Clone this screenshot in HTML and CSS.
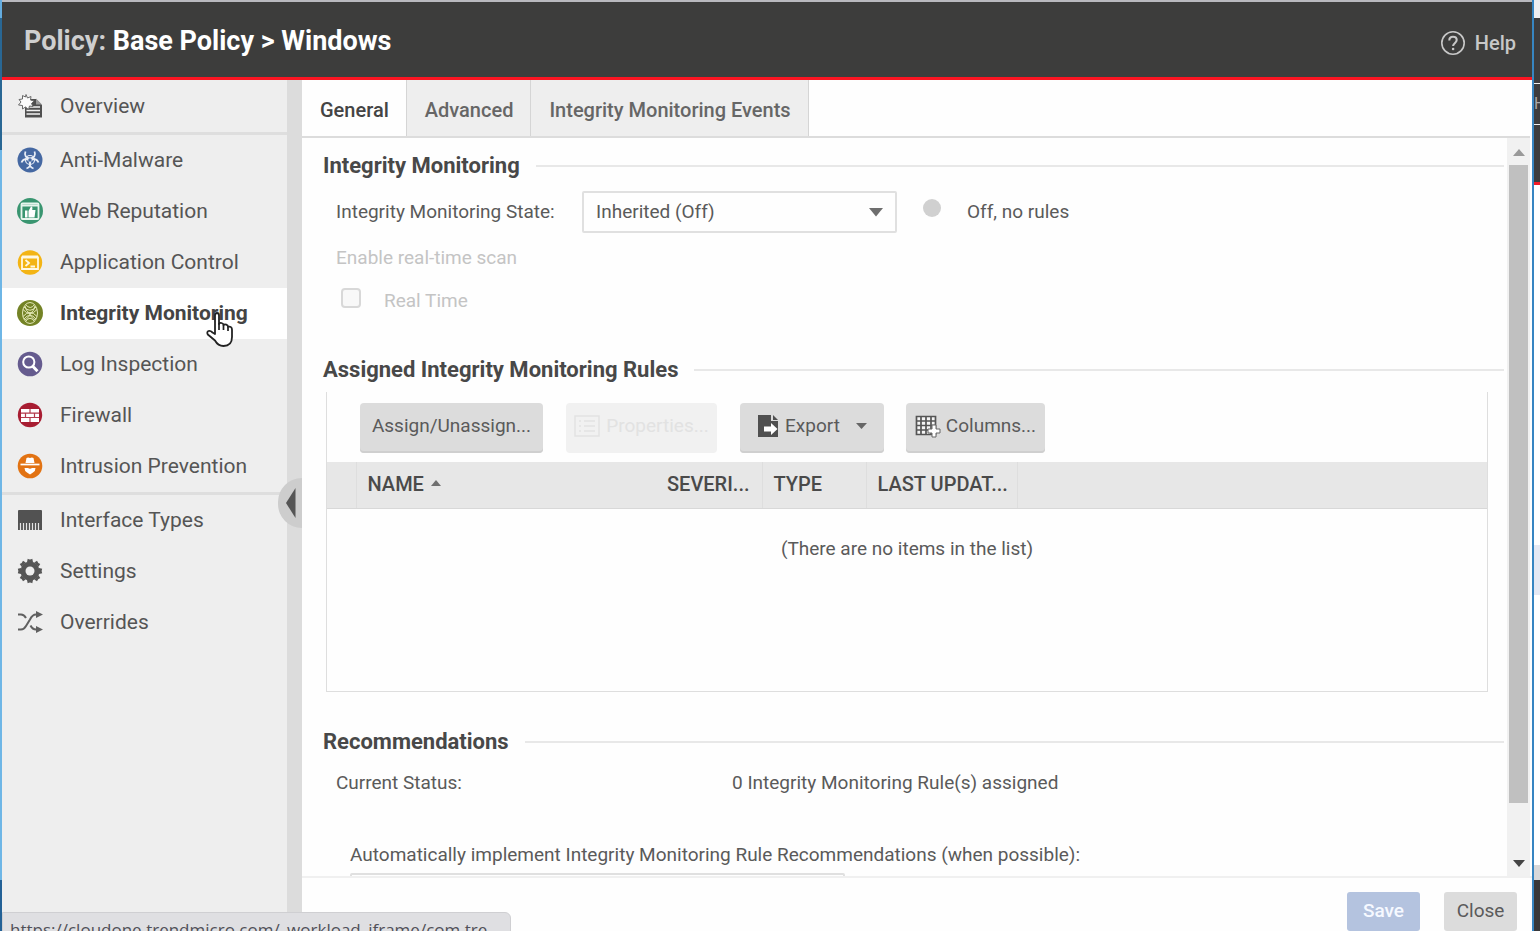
FILE: index.html
```html
<!DOCTYPE html>
<html lang="en">
<head>
<meta charset="utf-8">
<title>Policy: Base Policy &gt; Windows</title>
<link rel="stylesheet" href="styles.css">
</head>
<body>
<div class="desktop">
  <div class="edge-left"></div>
  <div class="window">
    <header class="header">
      <h1 class="title"><span class="title-kind">Policy:</span> Base Policy &gt; Windows</h1>
      <a class="help" href="#help">
        <svg width="26" height="26" viewBox="0 0 26 26" fill="none" stroke="currentColor" stroke-width="1.6"><circle cx="13" cy="13" r="11.2"/><path d="M9.3 10.4c0-2.2 1.6-3.6 3.7-3.6s3.7 1.3 3.7 3.3c0 2.8-3.6 2.9-3.6 6" stroke-width="2.1"/><circle cx="13.1" cy="19" r="1.3" fill="currentColor" stroke="none"/></svg>
        <span>Help</span>
      </a>
    </header>
    <div class="body">
      <nav class="sidebar">
        <ul class="nav">
          <li><a class="nav-item" href="#overview"><svg class="ico" viewBox="0 0 26 26"><path d="M8 6h11l6 6v12.500H8z" fill="#505050"/><path d="M19 5.500v6h6z" fill="#999"/><path d="M9.500 14h13.500M9.500 17.500h13.500M9.500 21h13.500" stroke="#f2f2f2" stroke-width="1.500"/><path d="M9 1.500l1.500 3.500 3.500-1.500-.5 3.500 3.500 1-2.500 2.500 1.500 3-3.500-.500-1 3.500-3-2.500-3 2 0-3.500-4-.5 2.500-3-2-2.500 3.500-.5 0-3.500 3 1.500z" fill="#fbfbfb" stroke="#6a6a6a" stroke-width="1"/></svg>Overview</a></li>
          <li class="nav-split"><a class="nav-item" href="#anti-malware"><svg class="ico" viewBox="0 0 26 26"><circle cx="13" cy="13" r="12.500" fill="#4568a2"/><g fill="none" stroke="#e8edf6" stroke-width="1.800"><path d="M8.500 4.500c-1.500 3.500.5 7 4.500 7s6-3.500 4.500-7M4.500 15.500c1.500-4 6-4.500 8-1.500s.5 6.500-3 7.500M21.500 15.500c-1.500-4-6-4.500-8-1.500s-.5 6.500 3 7.500"/><circle cx="13" cy="13" r="4.500" stroke-width="1.200"/></g><circle cx="13" cy="13" r="1.800" fill="#4568a2"/></svg>Anti-Malware</a></li>
          <li><a class="nav-item" href="#web-reputation"><svg class="ico" viewBox="0 0 26 26"><circle cx="13" cy="13" r="13" fill="#399570"/><rect x="4.500" y="5.500" width="17" height="15.500" rx="1" fill="none" stroke="#e6f5ed" stroke-width="1.800"/><path d="M5 7.500h16" stroke="#e6f5ed" stroke-width="2"/><path d="M8 12.500h2.500v7H8zM11.500 13l2.500-4.500c1.500 0 1.800 1.500 1.200 3.500h3.300l-1 7.500h-6z" fill="#fff"/></svg>Web Reputation</a></li>
          <li><a class="nav-item" href="#application-control"><svg class="ico" viewBox="0 0 26 26"><circle cx="13" cy="13.500" r="12.200" fill="#f3b414"/><path d="M5 8.500h16V20H5zM5 7.500h16M8.500 11l3.500 3-3.500 3M13.500 17.500h4.500" fill="none" stroke="#fff8e2" stroke-width="1.800"/></svg>Application Control</a></li>
          <li><a class="nav-item active" href="#integrity-monitoring" aria-current="page"><svg class="ico" viewBox="0 0 26 26"><circle cx="13" cy="13" r="13" fill="#748326"/><g fill="none" stroke="#e4e8b8" stroke-width="1"><ellipse cx="13" cy="13" rx="7.500" ry="10.500"/><path d="M8.500 4.500q5 6 9 0M7 7q6 6.500 12 0M6 9.500q7 8 14 0M6 16.500q7-8 14 0M7 19q6-7.500 12 0M8.500 21.500q4.500-6.500 9 0M8 6q1 5 4 7t-4 7M18 6q-1 5-4 7t4 7"/></g></svg>Integrity Monitoring</a></li>
          <li><a class="nav-item" href="#log-inspection"><svg class="ico" viewBox="0 0 26 26"><circle cx="13" cy="13" r="12.300" fill="#655b8e"/><circle cx="11.800" cy="11" r="5.600" fill="none" stroke="#fff" stroke-width="2"/><path d="M15.500 15l5 5.200" stroke="#fff" stroke-width="3"/></svg>Log Inspection</a></li>
          <li><a class="nav-item" href="#firewall"><svg class="ico" viewBox="0 0 26 26"><circle cx="13" cy="13" r="12.200" fill="#a81d32"/><path d="M4 7h18v13H4z" fill="#fff"/><path d="M4 11.200h18M4 15.500h18M13 7v4M8.500 11.500v4M17.500 11.500v4M13 15.500V20" stroke="#b43a4b" stroke-width="1.200"/></svg>Firewall</a></li>
          <li><a class="nav-item" href="#intrusion-prevention"><svg class="ico" viewBox="0 0 26 26"><circle cx="13" cy="13" r="12.300" fill="#e27313"/><path d="M8.500 10l1-5q1.500-1 3.500 0 2-1 3.500 0l1 5z" fill="#fff"/><path d="M3.500 11.500h19" stroke="#fff" stroke-width="1.700"/><path d="M7.500 15h3.500q2 1.500 4 0h3.500q0 3-2.500 4.500l-3 2-3-2q-2.500-1.500-2.500-4.500z" fill="#fff"/></svg>Intrusion Prevention</a></li>
          <li class="nav-split"><a class="nav-item" href="#interface-types"><svg class="ico" viewBox="0 0 26 26"><path d="M1 4q0-1 1-1h22q1 0 1 1v19H1z" fill="#525252"/><path d="M3.500 16v7M6.500 16v7M9.500 16v7M12.500 16v7M15.500 16v7M18.500 16v7M21.500 16v7" stroke="#e4e4e4" stroke-width="1.200"/></svg>Interface Types</a></li>
          <li><a class="nav-item" href="#settings"><svg class="ico" viewBox="0 0 26 26"><g fill="#565656"><circle cx="13" cy="13" r="9.500"/><g id="teeth"><path d="M10 4l.7-3.200q2.300 1.200 4.600 0L16 4zM10 22l.7 3.200q2.300-1.200 4.600 0L16 22z"/><path d="M4 10l-3.200.7q1.200 2.300 0 4.600L4 16zM22 10l3.200.7q-1.200 2.300 0 4.600L22 16z"/></g><use href="#teeth" transform="rotate(45 13 13)"/></g><circle cx="13" cy="13" r="4.500" fill="#eee"/></svg>Settings</a></li>
          <li><a class="nav-item" href="#overrides"><svg class="ico" viewBox="0 0 26 26"><g fill="none" stroke="#606060" stroke-width="2"><path d="M1 5.500h3q3 0 5 3.500M1 20.500h3q3 0 5-3.500l4-6.500q2.500-5 6-5h2M13.500 16.500q2 4 5.500 4h2"/></g><path d="M19 2l7 3.500L19 9zM19 17l7 3.500-7 3.500z" fill="#606060"/></svg>Overrides</a></li>
        </ul>
      </nav>
      <div class="splitter">
        <button class="collapse" aria-label="Collapse sidebar"><svg width="10" height="30" viewBox="0 0 10 30"><path d="M9.500 0v30L0 15z" fill="#555"/></svg></button>
      </div>
      <main class="main">
        <div class="tabs" role="tablist">
          <button class="tab selected" role="tab" aria-selected="true">General</button>
          <button class="tab" role="tab">Advanced</button>
          <button class="tab" role="tab">Integrity Monitoring Events</button>
        </div>
        <div class="viewport">
          <div class="content">
            <section class="sec-state">
              <h2 class="heading">Integrity Monitoring</h2>
              <div class="state-row">
                <label class="state-label" for="state">Integrity Monitoring State:</label>
                <div class="select-box">
                  <select id="state" class="select"><option>Inherited (Off)</option></select>
                  <svg class="select-arrow" width="14" height="9" viewBox="0 0 14 9"><path d="M0 0h14L7 8.500z" fill="#6e6e6e"/></svg>
                </div>
                <span class="dot"></span>
                <span>Off, no rules</span>
              </div>
              <p class="scan-label">Enable real-time scan</p>
              <div class="check-row">
                <input class="check" id="rt" type="checkbox" disabled>
                <label for="rt">Real Time</label>
              </div>
            </section>
            <section class="sec-rules">
              <h2 class="heading">Assigned Integrity Monitoring Rules</h2>
              <div class="rules">
                <div class="toolbar">
                  <button class="btn">Assign/Unassign...</button>
                  <button class="btn off" disabled><svg width="26" height="22" viewBox="0 0 26 22" fill="none" stroke="#e2e2e2" stroke-width="1.500"><path d="M1 1h24v20H1zM5 6h2M5 11h2M5 16h2M10 6h11M10 11h11M10 16h11"/></svg>Properties...</button>
                  <button class="btn export"><svg width="22" height="24" viewBox="0 0 22 24"><path d="M1 1h13v6h7v16H1z" fill="#505050"/><path d="M16 1l5 5h-5z" fill="#505050"/><path d="M7 12.500h7V9l6.500 6-6.500 6v-3.500H7z" fill="#fff"/></svg>Export<svg class="caret" width="11" height="6" viewBox="0 0 11 6"><path d="M0 0h11L5.500 6z" fill="#666"/></svg></button>
                  <button class="btn columns"><svg width="26" height="24" viewBox="0 0 26 24"><path d="M1 2h20v19H1z" fill="#f5f5f5"/><path d="M1.500 2.500h19v18h-19zM6 2v19M11 2v19M16 2v19M1 7h20M1 11.500h20M1 16h20" fill="none" stroke="#555" stroke-width="1.700"/><path d="M17 11h4v4h4v4h-4v4h-4v-4h-4v-4h4z" fill="#fff" stroke="#666" stroke-width="1"/></svg>Columns...</button>
                </div>
                <table class="grid">
                  <colgroup><col class="c-pick"><col class="c-name"><col class="c-sev"><col class="c-type"><col class="c-date"><col></colgroup>
                  <thead><tr><th></th><th>NAME <svg class="sort" width="10" height="6" viewBox="0 0 10 6"><path d="M0 6h10L5 0z" fill="#707070"/></svg></th><th>SEVERI...</th><th>TYPE</th><th>LAST UPDAT...</th><th></th></tr></thead>
                  <tbody><tr><td colspan="6">(There are no items in the list)</td></tr></tbody>
                </table>
              </div>
            </section>
            <section>
              <h2 class="heading">Recommendations</h2>
              <div class="status-row"><span>Current Status:</span><span>0 Integrity Monitoring Rule(s) assigned</span></div>
              <label class="auto-label" for="auto">Automatically implement Integrity Monitoring Rule Recommendations (when possible):</label>
              <select class="select auto" id="auto"><option>Inherited (No)</option></select>
            </section>
          </div>
          <div class="scrollbar">
            <svg width="12" height="7" viewBox="0 0 12 7"><path d="M0 7h12L6 0z" fill="#999"/></svg>
            <div class="track"><div class="thumb"></div></div>
            <svg width="12" height="7" viewBox="0 0 12 7"><path d="M0 0h12L6 7z" fill="#444"/></svg>
          </div>
        </div>
        <footer class="footer">
          <button class="foot-btn save">Save</button>
          <button class="foot-btn">Close</button>
        </footer>
      </main>
    </div>
  </div>
  <div class="edge-right">
    <div class="er-top"></div><div class="er-dark"></div><div class="er-menu">H</div><div class="er-dark er-low"></div><div class="er-page"></div><div class="er-row"></div><div class="er-rest"></div><div class="er-gray"></div><div class="er-foot"></div>
  </div>
  <div class="status">https://cloudone.trendmicro.com/_workload_iframe/com.tre...</div>
  <svg class="cursor" width="28" height="38" viewBox="0 0 28 38"><path d="M9 23V4.500q0-2.500 2-2.500t2 2.500V13q.5-1.500 2.500-1t2 2q1-1 2.800-.3t1.700 2q4-.7 4 3V26q0 9-8.500 9-5.500 0-8.500-5.500L1.800 23.500q-1.300-2.500.7-3.500 2-.5 4 1.500z" fill="#fff" stroke="#222" stroke-width="1.800" stroke-linejoin="round"/><path d="M13 12v7M17.500 14v5M22 15.500V20" stroke="#222" stroke-width="1.700"/></svg>
</div>
</body>
</html>
```

FILE: styles.css
```css
* { box-sizing: border-box; }
body { margin: 0; font-family: Roboto, "Liberation Sans", sans-serif; font-size: 19px; line-height: 24px; color: #5a5a5a; }
h1, h2, p, ul { margin: 0; padding: 0; }
button, select, input { font: inherit; color: inherit; margin: 0; }
button { border: 0; cursor: pointer; }
a { color: inherit; text-decoration: none; }
svg { flex: none; display: block; }

.desktop { position: relative; display: grid; grid-template-columns: 2px minmax(0, 1fr) 8px; height: 100vh; overflow: hidden; }
.edge-left { background: linear-gradient(#64acdf 0 18px, #296794 18px 150px, #6eb6e6 150px 880px, #236196 880px); }
.window { display: flex; flex-direction: column; min-height: 0; border-top: 2px solid #b9b9be; }

.header { display: flex; justify-content: space-between; align-items: center; height: 78px; padding: 2px 16px 0 22px; background: #3d3d3c; border-bottom: 3px solid #fb1522; color: #fff; flex: none; }
.title { font-size: 27px; line-height: 30px; font-weight: 700; }
.title-kind { color: #cfcfcf; }
.help { display: flex; align-items: center; gap: 9px; padding-top: 5px; font-size: 20px; font-weight: 500; color: #c8c8c8; }

.body { display: flex; flex: 1; min-height: 0; }
.sidebar { width: 285px; flex: none; background: #eee; }
.nav { list-style: none; padding-top: 1px; }
.nav-item { display: flex; align-items: center; gap: 17px; height: 51px; padding: 0 0 2px 15px; font-size: 21px; color: #555; }
.nav-item.active { background: #fff; color: #444; font-weight: 700; }
.nav-split { border-top: 3px solid #dedede; }
.ico { width: 26px; height: 26px; }
.splitter { width: 15px; flex: none; background: #dcdcdc; position: relative; }
.collapse { position: absolute; right: 0; top: 398px; width: 24px; height: 50px; padding: 0 6px 0 0; display: flex; align-items: center; justify-content: flex-end; background: #cdcdcd; border-radius: 24px 0 0 24px; }

.main { display: flex; flex-direction: column; flex: 1; min-width: 0; min-height: 0; background: #fefefe; }
.tabs { display: flex; height: 58px; flex: none; border-bottom: 2px solid #dcdcdc; margin-right: 2px; }
.tab { padding: 4px 17px 0 18px; font-size: 20px; font-weight: 500; background: #eee; border-right: 1px solid #d5d5d5; color: #666; }
.tab.selected { background: #fefefe; color: #444; }

.viewport { display: flex; flex: 1; min-height: 0; padding-right: 2px; }
.content { flex: 1; min-width: 0; overflow: hidden; padding: 14px 3px 0 21px; }
.heading { display: flex; align-items: center; gap: 16px; font-size: 22px; line-height: 28px; font-weight: 700; color: #484848; }
.heading::after { content: ""; flex: 1; height: 2px; background: #e8e8e8; }
.sec-state { height: 204px; }
.state-row { display: flex; align-items: center; padding: 11px 0 0 13px; }
.state-label { width: 246px; }
.select-box { position: relative; width: 315px; }
.select { appearance: none; display: block; width: 100%; height: 42px; padding: 0 12px; background: #fefefe; border: 2px solid #e0e0e0; border-radius: 2px; }
.select-arrow { position: absolute; right: 14px; top: 17px; }
.dot { width: 18px; height: 18px; margin: 0 26px 8px; border-radius: 50%; background: #d0d0d0; }
.scan-label { padding: 13px 0 0 13px; color: #c4c4c4; }
.check-row { display: flex; align-items: center; gap: 23px; padding: 18px 0 0 18px; color: #c4c4c4; }
.check { appearance: none; width: 20px; height: 20px; margin-bottom: 5px; border: 2px solid #d8d8d8; border-radius: 4px; background: #f8f8f8; }

.rules { margin: 8px 16px 36px 3px; min-height: 300px; border: solid #dedede; border-width: 0 1px 1px; }
.toolbar { display: flex; height: 70px; padding: 11px 0 9px 33px; }
.btn { display: flex; align-items: center; justify-content: center; gap: 6px; width: 183px; height: 50px; padding: 0 0 4px; margin-right: 23px; background: #dcdcdc; border-radius: 4px; box-shadow: inset 0 -2px 0 #cfcfcf; }
.btn.off { width: 151px; background: #f1f1f1; color: #e2e2e2; box-shadow: none; }
.btn.export { width: 144px; margin-right: 22px; }
.btn.columns { width: 139px; gap: 5px; }
.caret { margin-left: 10px; }
.grid { width: 100%; table-layout: fixed; border-collapse: collapse; }
.c-pick { width: 29px; }
.c-name { width: 300px; }
.c-sev { width: 106px; }
.c-type { width: 104px; }
.c-date { width: 151px; }
.grid th { height: 46px; padding: 0 0 2px 11px; text-align: left; font-size: 20px; font-weight: 500; color: #4a4a4a; background: #e7e7e7; border-right: 1px solid #dedede; border-bottom: 1px solid #d8d8d8; white-space: nowrap; }
.grid th:nth-child(2), .grid th:last-child { border-right: 0; }
.sort { display: inline-block; margin: 0 0 5px 2px; }
.grid td { padding: 28px 0; text-align: center; }
.status-row { display: grid; grid-template-columns: 396px 1fr; padding: 15px 0 48px 13px; }
.auto-label { display: block; padding: 0 0 6px 27px; white-space: nowrap; }
.auto { width: 495px; margin-left: 27px; }

.scrollbar { width: 23px; flex: none; display: flex; flex-direction: column; align-items: center; gap: 9px; padding: 11px 0 9px; background: #f1f1f1; }
.track { flex: 1; width: 19px; }
.thumb { height: 93%; background: #c0c0c0; }
.footer { display: flex; justify-content: flex-end; gap: 24px; height: 55px; flex: none; padding: 14px 15px 0; border-top: 2px solid #f0f0f0; }
.foot-btn { width: 73px; height: 39px; padding: 0 0 2px; background: #dcdcdc; border-radius: 3px; }
.foot-btn.save { background: #b4c3df; color: #f6f9ff; font-weight: 500; }

.edge-right { display: flex; flex-direction: column; border-left: 2px solid #3785c2; background: #fff; }
.er-top { height: 18px; background: #eeeef1; }
.er-dark { height: 65px; background: #3c3c3e; }
.er-menu { height: 42px; overflow: hidden; border: solid #eee; border-width: 1px 0; background: #3c3c3e; color: #aaa; font-size: 16px; line-height: 40px; }
.er-low { height: 60px; border-bottom: 3px solid #f31b27; }
.er-page { height: 360px; }
.er-row { height: 50px; background: #e5e9f4; }
.er-rest { flex: 1; }
.er-gray { height: 15px; background: #d8d8da; }
.er-foot { height: 51px; background: #38383a; }

.status { position: absolute; left: 2px; bottom: -16px; width: 509px; height: 35px; padding: 6px 7px; background: #dfdfe2; border: 1px solid #cfcfd2; border-radius: 0 6px 0 0; font-family: "Open Sans", "Noto Sans", sans-serif; font-size: 17px; line-height: 22px; color: #505058; white-space: nowrap; }
.cursor { position: absolute; left: 206px; top: 311px; }
```
